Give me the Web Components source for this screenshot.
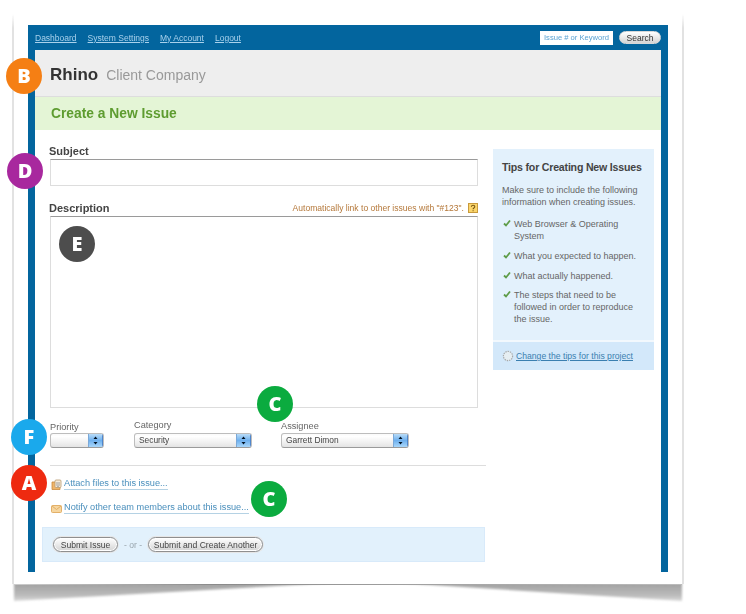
<!DOCTYPE html>
<html lang="en"><head><meta charset="utf-8"><title>Create a New Issue</title>
<style>
html,body{margin:0;background:#fff;font-family:"Liberation Sans",Arial,sans-serif}
body{height:614px;overflow:hidden}
</style></head>
<body>
<x-paper>
  <x-frame>
    <x-topbar slot="top">
      <x-nav-link>Dashboard</x-nav-link><x-nav-link>System Settings</x-nav-link><x-nav-link>My Account</x-nav-link><x-nav-link>Logout</x-nav-link>
    </x-topbar>
    <x-brand name="Rhino" company="Client Company"></x-brand>
    <x-title>Create a New Issue</x-title>
    <x-main>
      <x-form>
        <x-subject></x-subject>
        <x-description></x-description>
        <x-selects>
          <x-select label="Priority" w="54" lift="0"></x-select>
          <x-select label="Category" value="Security" w="118" lift="2"></x-select>
          <x-select label="Assignee" value="Garrett Dimon" w="128" lift="1"></x-select>
        </x-selects>
        <x-links>
          <x-icon-link icon="attach">Attach files to this issue...</x-icon-link>
          <x-icon-link icon="mail">Notify other team members about this issue...</x-icon-link>
        </x-links>
        <x-submit></x-submit>
      </x-form>
      <x-tips slot="side">
        <li>Web Browser &amp; Operating System</li>
        <li>What you expected to happen.</li>
        <li>What actually happened.</li>
        <li style="margin-top:-1px">The steps that need to be followed in order to reproduce the issue.</li>
      </x-tips>
    </x-main>
  </x-frame>
  <x-badge slot="over" letter="B" color="#f57f14" cx="10" cy="62"></x-badge>
  <x-badge slot="over" letter="D" color="#a8289e" cx="11" cy="157"></x-badge>
  <x-badge slot="over" letter="E" color="#4d4d4d" cx="63" cy="230"></x-badge>
  <x-badge slot="over" letter="C" color="#0bab3f" cx="261" cy="390"></x-badge>
  <x-badge slot="over" letter="F" color="#1aa9ec" cx="15" cy="423"></x-badge>
  <x-badge slot="over" letter="A" color="#ee2a10" cx="15" cy="469"></x-badge>
  <x-badge slot="over" letter="C" color="#0bab3f" cx="255" cy="485"></x-badge>
</x-paper>
<script>
function def(name, render){
  customElements.define(name, class extends HTMLElement{
    connectedCallback(){
      if(this.shadowRoot) return;
      this.attachShadow({mode:'open'}).innerHTML = render(this);
    }
  });
}
const btn = 'display:inline-flex;align-items:center;justify-content:center;box-sizing:border-box;border:1px solid #8f8f8f;border-radius:8px;background:linear-gradient(#fff,#e8e8e8 55%,#d4d4d4);box-shadow:inset 0 0 0 1px #fff,0 0 0 1px #e6e6e6;color:#444;';
def('x-paper',()=>`<style>
:host{display:block;position:relative;box-sizing:border-box;width:668px;height:570px;margin:14px 0 0 14px;padding:11px 14px 0;background:#fff}
.edge{position:absolute;top:0;bottom:0;width:3px;background:linear-gradient(transparent,#e2e2e2 14px);filter:blur(.6px)}
.l{left:-2px}.r{right:-2px}
.base{position:absolute;left:0;right:0;bottom:-1px;height:1px;background:linear-gradient(90deg,#ccc,#8a8a8a 30%,#a8a8a8 70%,#bbb);filter:blur(.4px)}
svg{position:absolute;left:-4px;top:568px}
.page{position:absolute;inset:0;background:#fff}
.hold{position:relative}
</style>
<svg width="676" height="26" viewBox="0 0 676 26"><defs>
<linearGradient id="g" x1="0" y1="0" x2="0" y2="1"><stop offset="0" stop-color="#a0a0a0"/><stop offset=".7" stop-color="#bcbcbc"/><stop offset="1" stop-color="#dadada"/></linearGradient>
<filter id="b" x="-5%" y="-40%" width="110%" height="180%"><feGaussianBlur stdDeviation="1.2"/></filter></defs>
<g filter="url(#b)"><polygon points="4,1 320,1 4,19" fill="url(#g)"/><polygon points="390,1 672,1 672,19" fill="url(#g)"/></g></svg>
<div class="edge l"></div><div class="edge r"></div>
<div class="page"></div>
<div class="base"></div>
<div class="hold"><slot></slot></div><slot name="over"></slot>`);
def('x-frame',()=>`<style>
:host{display:block;box-sizing:border-box;width:640px;height:547px;background:#03659e;padding:0 7px}
.in{display:flex;flex-direction:column;height:100%;filter:blur(.45px)}
.body{background:#fff;flex:1;display:flex;flex-direction:column}
</style><div class="in"><slot name="top"></slot><div class="body"><slot></slot></div></div>`);
def('x-topbar',()=>`<style>
:host{display:flex;align-items:center;height:25px;gap:11px}
.s{margin-left:auto;display:flex;align-items:center;gap:6px;font-size:7.6px}
.i{box-sizing:border-box;width:73px;height:14px;background:#fff;color:#5aa2d2;display:flex;align-items:center;padding-left:4px;white-space:nowrap}
.b{${btn}width:42px;height:13px;font-size:8.5px;color:#333;border-color:#d8d8d8;box-shadow:none}
</style><slot></slot><div class="s"><div class="i">Issue # or Keyword</div><div class="b">Search</div></div>`);
def('x-nav-link',()=>`<style>:host{display:block;font-size:8.5px;color:#a9d1ec;text-decoration:underline;white-space:nowrap}</style><slot></slot>`);
def('x-brand',e=>`<style>
:host{display:flex;align-items:baseline;box-sizing:border-box;height:47px;padding:14px 0 0 15px;background:#eee;border-bottom:1px solid #ddd;gap:8px;white-space:nowrap}
b{font-size:17px;color:#333;line-height:22px}
span{font-size:14px;color:#999}
</style><b>${e.getAttribute('name')}</b><span>${e.getAttribute('company')}</span>`);
def('x-title',()=>`<style>
:host{display:flex;align-items:center;height:33px;padding-left:16px;background:#e4f5d6;color:#5e9c30;font-size:13.8px;font-weight:bold}
</style><slot></slot>`);
def('x-main',()=>`<style>
:host{display:grid;grid-template-columns:451px 161px;column-gap:7px;flex:1}
.side{padding-top:19px}
</style><div><slot></slot></div><div class="side"><slot name="side"></slot></div>`);
def('x-form',()=>`<style>:host{display:block;padding:14px 0 0 7px}</style><slot></slot>`);
def('x-subject',()=>`<style>
:host{display:block;margin-left:7px;width:428px}
label{display:block;font-size:11px;font-weight:bold;color:#444;line-height:14px;margin-bottom:1px}
input{display:block;box-sizing:border-box;width:428px;height:27px;margin:0 0 0 1px;border:1px solid #ddd;border-top-color:#9a9a9a;background:#fff;padding:0;outline:0}
</style><label>Subject</label><input aria-label="Subject">`);
def('x-description',()=>`<style>
:host{display:block;margin:14px 0 0 7px;width:429px}
.h{display:flex;align-items:center;height:16px;justify-content:space-between}
label{font-size:11px;font-weight:bold;color:#444}
.n{display:flex;align-items:center;gap:4px;font-size:8.55px;color:#b5783a;white-space:nowrap}
svg{display:block}
textarea{display:block;box-sizing:border-box;width:428px;height:192px;margin:0 0 0 1px;border:1px solid #ddd;border-top-color:#9a9a9a;background:#fff;resize:none;padding:0;outline:0}
</style><div class="h"><label>Description</label><div class="n">Automatically link to other issues with "#123".
<svg width="10" height="10" viewBox="0 0 10 10"><rect x=".5" y=".5" width="9" height="9" fill="#fbd56b" stroke="#c89a3c"/><path d="M3.4 3.8c0-2.2 3.4-2 3.4 0 0 1.2-1.7 1.3-1.7 2.4M5.1 7.2v1" fill="none" stroke="#7a5a14" stroke-width="1.1"/></svg></div></div><textarea aria-label="Description"></textarea>`);
def('x-selects',()=>`<style>:host{display:flex;align-items:flex-end;height:40px;margin-left:8px;padding-bottom:0}
::slotted(:nth-child(1)){margin-right:30px}::slotted(:nth-child(2)){margin-right:29px}</style><slot></slot>`);
def('x-select',e=>`<style>
:host{display:block;width:${e.getAttribute('w')}px}
label{display:block;font-size:9.2px;color:#666;line-height:11px;margin-bottom:${+e.getAttribute('lift')}px}
.s{display:flex;box-sizing:border-box;height:15px;border:1px solid #bdbdbd;border-bottom-color:#9a9a9a;border-radius:3px;background:linear-gradient(#fafafa,#fff 20%,#e4e4e4);overflow:hidden}
.v{flex:1;font-size:8.4px;line-height:13px;padding-left:4px;color:#444;white-space:nowrap}
.a{width:13px;background:linear-gradient(#b9dcf8,#6eb0ee 50%,#a8d6fa);border-left:1px solid #7aa8d8;border-right:1px solid #4f86cc;display:flex;align-items:center;justify-content:center}
</style><label>${e.getAttribute('label')}</label><div class="s"><div class="v">${e.getAttribute('value')||''}</div><div class="a"><svg width="5" height="9" viewBox="0 0 5 9"><path d="M2.5 0.5 4.5 3H.5zM2.5 8.5 .5 6h4z" fill="#012"/></svg></div></div>`);
def('x-links',()=>`<style>:host{display:flex;flex-direction:column;gap:10px;margin:17px 0 0 8px;width:436px;padding-top:11px;border-top:1px solid #ddd}</style><slot></slot>`);
const icons={attach:`<path d="M1 3h7l1 1v6.5H1z" fill="#efb56b" stroke="#c98a3e" stroke-width=".8"/><rect x="4" y="1" width="6" height="7.5" rx="1" fill="#f7eddc" stroke="#b79a70" stroke-width=".8"/><path d="M6 3v3.5a1 1 0 0 0 2 0V3" fill="none" stroke="#8a8a8a" stroke-width=".8"/>`,
mail:`<rect x=".5" y="2.5" width="10" height="7" rx="1" fill="#f6d6a0" stroke="#e0a95c" stroke-width=".9"/><path d="M1 3l4.5 3.5L10 3" fill="none" stroke="#e0a95c" stroke-width=".9"/>`};
def('x-icon-link',e=>`<style>
:host{display:flex;align-items:center;height:14px;gap:2px;font-size:9.2px;color:#4a8fbc;white-space:nowrap;padding-left:1px}
span{border-bottom:1px solid #b5d2e4;line-height:11px}
svg{flex:none}
</style><svg width="11" height="11" viewBox="0 0 11 11">${icons[e.getAttribute('icon')]}</svg><span><slot></slot></span>`);
def('x-submit',()=>`<style>
:host{display:flex;align-items:center;box-sizing:border-box;width:443px;height:35px;margin-top:12px;padding-left:10px;background:#e2f1fc;border:1px solid #d8eafa;font-size:8.6px;color:#9aa6ae;white-space:nowrap}
.b{${btn}height:15px;color:#444}
.or{margin:0 6px}
</style><div class="b" style="width:65px">Submit Issue</div><span class="or">- or -</span><div class="b" style="width:115px">Submit and Create Another</div>`);
def('x-tips',()=>`<style>
:host{display:block;background:#e3f1fc;height:221px;box-sizing:border-box;font-size:9px;color:#666;line-height:12px;position:relative}
.t{padding:12px 9px 0}
h3{margin:0 0 10px;font-size:10.6px;line-height:13px;color:#444;white-space:nowrap;letter-spacing:-.2px}
p{margin:0 0 9.5px;white-space:nowrap}
.l{display:flex;flex-direction:column;gap:8px}
::slotted(li){display:block;padding-left:12px;margin:0;background:no-repeat 1px 1px/8px 8px url("data:image/svg+xml,%3Csvg xmlns='http://www.w3.org/2000/svg' viewBox='0 0 8 8'%3E%3Cpath d='M1 4.5 3 6.5 7 1.5' fill='none' stroke='%235e9c48' stroke-width='1.8'/%3E%3C/svg%3E")}
.f{position:absolute;left:0;right:0;bottom:0;height:30px;display:flex;align-items:center;gap:2px;padding-left:9px;background:#d3e8fa;border-top:2px solid #f2f8fd;box-sizing:border-box;color:#3a7fb0;font-size:8.65px;white-space:nowrap}
.f span{text-decoration:underline}
</style><div class="t"><h3>Tips for Creating New Issues</h3><p>Make sure to include the following<br>information when creating issues.</p><div class="l"><slot></slot></div></div>
<div class="f"><svg width="12" height="12" viewBox="0 0 12 12"><circle cx="6" cy="6" r="4.6" fill="#e6eef2" stroke="#a8a8a8" stroke-width="1.2" stroke-dasharray="1.4 .9"/></svg><span>Change the tips for this project</span></div>`);
def('x-badge',e=>`<style>
:host{position:absolute;left:${e.getAttribute('cx')-18}px;top:${e.getAttribute('cy')-18}px;width:36px;height:36px;border-radius:50%;background:${e.getAttribute('color')};color:#fff;display:flex;align-items:center;justify-content:center;font:800 20px/1 "Open Sans",sans-serif}
</style>${e.getAttribute('letter')}`);
</script>
</body></html>
